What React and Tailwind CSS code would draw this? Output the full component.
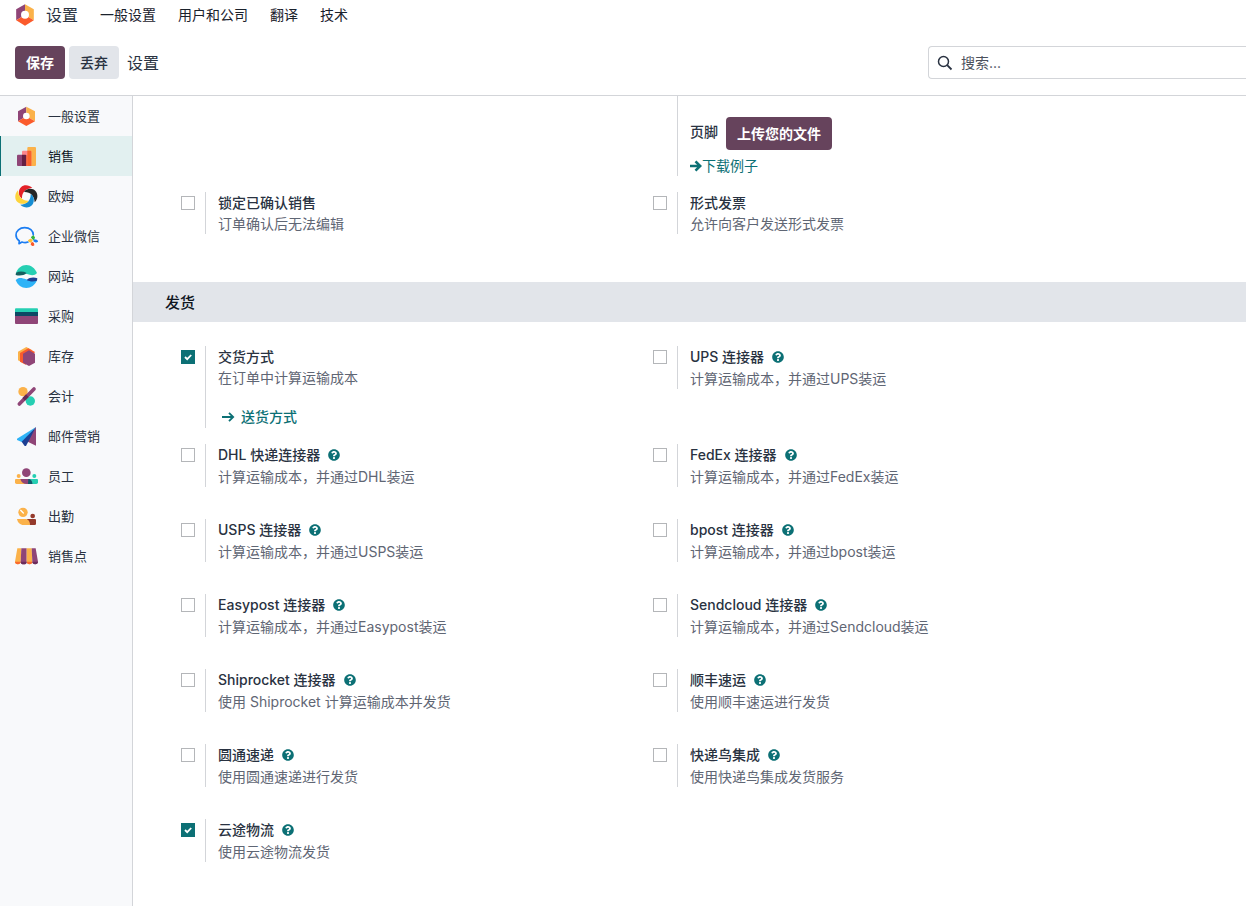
import React, { useState } from "react";
import { FaQuestionCircle } from "react-icons/fa";

const menuItems = ["一般设置", "用户和公司", "翻译", "技术"];

const HexLogo = ({ className }) => (
  <svg viewBox="6 4 57 66" className={className} aria-hidden="true">
    <path d="M34.5 5 8 20v33l26.500-16z" fill="#8f4577" />
    <path d="M34.500 5 61 20v33L34.500 37z" fill="#fbb24a" />
    <path d="M8 53l26.500-16L61 53 34.500 69z" fill="#fb5b2c" />
    <circle cx="34.500" cy="36" r="12" fill="#fff" />
  </svg>
);

const swirl = "M52 12C36-4 8 4 12 31c1 6 5 10 9 13C20 26 31 13 52 12z";

const icons = {
  general: (
    <>
      <path d="M34 8 9 22v30l25-15z" fill="#8f4577" />
      <path d="M34 8 60 22v30L34 37z" fill="#fbb24a" />
      <path d="M9 52l25-15 26 15-26 14z" fill="#fb5b2c" />
      <circle cx="34" cy="36" r="10" fill="#fff" />
    </>
  ),
  sales: (
    <>
      <rect x="6" y="32" width="28" height="34" rx="3" fill="#8f4577" />
      <rect x="37" y="9" width="26" height="57" rx="3" fill="#fbb24a" />
      <path d="M24 20h22a3 3 0 0 1 3 3v40a3 3 0 0 1-3 3H24a3 3 0 0 1-3-3V23a3 3 0 0 1 3-3z" fill="#fc868b" />
      <path d="M37 20h9a3 3 0 0 1 3 3v43H37z" fill="#f9622a" />
      <path d="M21 32h10a3 3 0 0 1 3 3v31H21z" fill="#641f42" />
      <path d="M34 34h3v32h-3z" fill="#f9622a" />
    </>
  ),
  ohm: (
    <>
      <path d={swirl} fill="#e32128" />
      <path d={swirl} fill="#262626" transform="rotate(90 34 37)" />
      <path d={swirl} fill="#168dd2" transform="rotate(180 34 37)" />
      <path d={swirl} fill="#fdd43c" transform="rotate(270 34 37)" />
    </>
  ),
  wecom: (
    <>
      <path
        d="M55 33C55 20 44 11 29 11 14 11 3 21 3 33c0 8 4 14 10 18l-1 8 9-5c6 2 13 2 18 0"
        fill="none"
        stroke="#1b7df2"
        strokeWidth="5"
        strokeLinecap="round"
        strokeLinejoin="round"
      />
      <path d="M50 40l5-4 3 5-3 5z" fill="#35b43f" stroke="#35b43f" strokeWidth="4" strokeLinejoin="round" />
      <path d="M41 50l6-4 4 4-5 4z" fill="#fdbf2e" stroke="#fdbf2e" strokeWidth="4" strokeLinejoin="round" />
      <path d="M51 56l4 2 1 5-4 1-3-3z" fill="#fb5a2a" stroke="#fb5a2a" strokeWidth="4" strokeLinejoin="round" />
      <path d="M58 48l7 1 2 3-4 2-6-3z" fill="#1b7df2" stroke="#1b7df2" strokeWidth="4" strokeLinejoin="round" />
    </>
  ),
  website: (
    <>
      <path d="M3 27C8 12 20 3 34 3c14 0 26 9 32 24-7 8-17 8-30 3C24 25 14 24 3 27z" fill="#26cfb3" />
      <path d="M3 26c11-5 22-4 32 1-9 8-21 9-33 6z" fill="#155f5f" />
      <path d="M66 49C60 64 48 72 34 72 20 72 8 64 2 48c8-9 19-7 31-2 12 5 22 6 33 3z" fill="#2eb3f7" />
      <path d="M66 50c-11 4-22 3-31-2 9-8 21-9 32-5z" fill="#1c3f93" />
    </>
  ),
  purchase: (
    <>
      <path d="M3 13h63a3 3 0 0 1 3 3v9H0v-9a3 3 0 0 1 3-3z" fill="#26cfb3" />
      <path d="M0 24h69v12H0z" fill="#0d4864" />
      <path d="M0 36h69v21a3 3 0 0 1-3 3H3a3 3 0 0 1-3-3z" fill="#8f4577" />
    </>
  ),
  inventory: (
    <>
      <path d="M9 23 34 9l18 10-28 38-15-8z" fill="#fbb24a" />
      <path d="M15 27 40 13l20 11-28 38-17-9z" fill="#fb5b2c" />
      <path d="M24 29 42 19l18 10v27L42 66 24 56z" fill="#8f4577" />
    </>
  ),
  accounting: (
    <>
      <circle cx="24" cy="23" r="14" fill="#fbb24a" />
      <circle cx="46" cy="51" r="14" fill="#26cfb3" />
      <path d="M13 60 57 15" stroke="#8f4577" strokeWidth="11" strokeLinecap="round" />
      <path d="M26 46l11-11" stroke="#642a55" strokeWidth="11" />
    </>
  ),
  email: (
    <>
      <path d="M63 9v56L35 52z" fill="#8f4577" />
      <path d="M63 9 6 44v4l16 7z" fill="#2eb3f7" />
      <path d="M63 9 20 53l9 13h4z" fill="#1c3f93" />
    </>
  ),
  employees: (
    <>
      <circle cx="34" cy="26" r="13" fill="#8f4577" />
      <circle cx="11" cy="36" r="6" fill="#fbb24a" />
      <circle cx="58" cy="36" r="6" fill="#26cfb3" />
      <path d="M3 45h26l8 15H5a5 5 0 0 1-5-5v-7a3 3 0 0 1 3-3z" fill="#fbb24a" />
      <path d="M38 45h28a3 3 0 0 1 3 3v7a5 5 0 0 1-5 5H36z" fill="#26cfb3" />
      <path d="M16 45h24c7 0 12 6 12 15H36c-11 0-17-5-20-15z" fill="#8f4577" />
      <path d="M40 45c7 0 12 6 12 15H39z" fill="#0d5c6c" />
    </>
  ),
  attendance: (
    <>
      <circle cx="24" cy="25" r="14" fill="#fbb24a" />
      <path d="M17 19l8 8" stroke="#fff" strokeWidth="4" strokeLinecap="round" />
      <circle cx="53" cy="36" r="7" fill="#953a2c" />
      <path d="M36 45h24a3 3 0 0 1 3 3v11a4 4 0 0 1-4 4H40z" fill="#953a2c" />
      <path d="M6 45h25c8 0 14 7 14 18H26C15 63 8 56 6 45z" fill="#fbb24a" />
    </>
  ),
  pos: (
    <>
      <path d="M7 13h12l-2 40a8 7 0 0 1-17 0z" fill="#fbb24a" />
      <path d="M19 13h16v40a8 7 0 0 1-18 0z" fill="#8f4577" />
      <path d="M35 13h15l2 40a8 7 0 0 1-17 0z" fill="#fbb24a" />
      <path d="M50 13h12l7 40a8 7 0 0 1-17 0z" fill="#8f4577" />
      <path d="M0 53h17a8 7 0 0 1-17 0zM35 53h17a8 7 0 0 1-17 0z" fill="#fb6a2c" />
      <path d="M17 53h18a8 7 0 0 1-18 0zM52 53h17a8 7 0 0 1-17 0z" fill="#6b2d5b" />
    </>
  ),
};

const apps = [
  { name: "一般设置", icon: "general" },
  { name: "销售", icon: "sales" },
  { name: "欧姆", icon: "ohm" },
  { name: "企业微信", icon: "wecom" },
  { name: "网站", icon: "website" },
  { name: "采购", icon: "purchase" },
  { name: "库存", icon: "inventory" },
  { name: "会计", icon: "accounting" },
  { name: "邮件营销", icon: "email" },
  { name: "员工", icon: "employees" },
  { name: "出勤", icon: "attendance" },
  { name: "销售点", icon: "pos" },
];

const orderSettings = [
  { id: "lock", title: "锁定已确认销售", text: "订单确认后无法编辑" },
  { id: "proforma", title: "形式发票", text: "允许向客户发送形式发票" },
];

const deliverySettings = [
  { id: "delivery", title: "交货方式", text: "在订单中计算运输成本", link: "送货方式" },
  { id: "ups", title: "UPS 连接器", text: "计算运输成本，并通过UPS装运", help: true },
];

const connectorSettings = [
  { id: "dhl", title: "DHL 快递连接器", text: "计算运输成本，并通过DHL装运", help: true },
  { id: "fedex", title: "FedEx 连接器", text: "计算运输成本，并通过FedEx装运", help: true },
  { id: "usps", title: "USPS 连接器", text: "计算运输成本，并通过USPS装运", help: true },
  { id: "bpost", title: "bpost 连接器", text: "计算运输成本，并通过bpost装运", help: true },
  { id: "easypost", title: "Easypost 连接器", text: "计算运输成本，并通过Easypost装运", help: true },
  { id: "sendcloud", title: "Sendcloud 连接器", text: "计算运输成本，并通过Sendcloud装运", help: true },
  { id: "shiprocket", title: "Shiprocket 连接器", text: "使用 Shiprocket 计算运输成本并发货", help: true },
  { id: "sf", title: "顺丰速运", text: "使用顺丰速运进行发货", help: true },
  { id: "yto", title: "圆通速递", text: "使用圆通速递进行发货", help: true },
  { id: "kdn", title: "快递鸟集成", text: "使用快递鸟集成发货服务", help: true },
  { id: "yunexpress", title: "云途物流", text: "使用云途物流发货", help: true },
];

function Setting({ item, checked, onToggle }) {
  return (
    <div className="flex items-start">
      <div className="relative mt-1 mr-2.5 size-3.5 shrink-0">
        <input
          type="checkbox"
          id={item.id}
          checked={checked}
          onChange={() => onToggle(item.id)}
          className="block size-3.5 appearance-none border border-[#b4b6b9] bg-white checked:border-[#0c7075] checked:bg-[#0c7075]"
        />
        {checked && (
          <svg viewBox="0 0 14 14" className="pointer-events-none absolute inset-0 size-3.5" aria-hidden="true">
            <path d="M4 7l2.200 2.200L10.200 5" fill="none" stroke="#fff" strokeWidth="1.800" />
          </svg>
        )}
      </div>
      <div className="border-l border-[#d3d5d9] pl-3">
        <div className="flex items-center gap-2">
          <label htmlFor={item.id} className={`font-medium text-[#293241] ${item.help ? "leading-[22px]" : "leading-[21px]"}`}>
            {item.title}
          </label>
          {item.help && <FaQuestionCircle className="size-3 text-[#0c7075]" />}
        </div>
        <p className="leading-[21px] text-[#5f6674]">{item.text}</p>
        {item.link && (
          <a href="#" className="mt-[18px] flex items-center gap-1.5 pl-[3px] leading-[22px] font-medium text-[#0c7075]">
            <svg viewBox="0 0 14 14" className="size-3.5" aria-hidden="true">
              <path d="M1 7h11M8 2.800 12.200 7 8 11.200" fill="none" stroke="currentColor" strokeWidth="1.800" />
            </svg>
            {item.link}
          </a>
        )}
      </div>
    </div>
  );
}

function App() {
  const [activeApp, setActiveApp] = useState("sales");
  const [enabled, setEnabled] = useState(["delivery", "yunexpress"]);

  const handleToggle = (id) => {
    setEnabled(enabled.includes(id) ? enabled.filter((e) => e !== id) : [...enabled, id]);
  };

  const renderSettings = (items) =>
    items.map((item) => (
      <Setting key={item.id} item={item} checked={enabled.includes(item.id)} onToggle={handleToggle} />
    ));

  return (
    <div className="flex min-h-screen flex-col overflow-x-hidden bg-white font-[Inter,'Noto_Sans_CJK_SC',sans-serif] text-sm text-[#293241]">
      <header className="border-b border-[#d3d5d9]">
        <nav className="flex h-[30px] items-center gap-[22px] pl-[15px]">
          <a href="#" className="flex items-center gap-[11px] text-base">
            <HexLogo className="h-[22px] w-5" />
            设置
          </a>
          {menuItems.map((name) => (
            <a key={name} href="#" className="text-[#1a212c]">
              {name}
            </a>
          ))}
        </nav>

        <div className="flex items-center justify-between py-4 pl-[15px]">
          <div className="flex items-center gap-1">
            <button type="button" className="h-[33px] rounded bg-[#66435c] px-[11px] font-bold text-white">
              保存
            </button>
            <button type="button" className="h-[33px] rounded bg-[#e2e5ea] px-[11px] font-medium">
              丢弃
            </button>
            <h1 className="pl-1 text-base">设置</h1>
          </div>
          <div className="flex h-[33px] w-[318px] items-center gap-2 rounded-l border border-r-0 border-[#d3d5d9] pl-2">
            <svg viewBox="0 0 16 16" className="size-4" aria-hidden="true">
              <circle cx="6.500" cy="6.500" r="5" fill="none" stroke="#293241" strokeWidth="1.500" />
              <path d="M10.200 10.200 14.500 14.500" stroke="#293241" strokeWidth="1.800" />
            </svg>
            <input
              type="text"
              aria-label="搜索"
              placeholder="搜索..."
              className="min-w-0 flex-1 outline-none placeholder:text-[#4b515c]"
            />
          </div>
        </div>
      </header>

      <div className="flex flex-1">
        <aside className="w-[133px] shrink-0 border-r border-[#d3d5d9] bg-[#f8f9fb] text-[13px]">
          {apps.map((app) => (
            <button
              key={app.name}
              type="button"
              onClick={() => setActiveApp(app.icon)}
              className={`flex h-10 w-full items-center gap-[9px] border-l pl-3.5 ${
                activeApp === app.icon ? "border-[#0c7075] bg-[#e2f0f0] text-[#10161f]" : "border-transparent"
              }`}
            >
              <svg viewBox="0 0 72 72" className="size-6" aria-hidden="true">
                {icons[app.icon]}
              </svg>
              {app.name}
            </button>
          ))}
        </aside>

        <main className="min-w-0 flex-1">
          <section className="grid max-w-[992px] grid-cols-2 gap-y-4 pb-12 pl-12">
            <div className="col-start-2 ml-6 border-l border-[#d3d5d9] pt-[21px] pl-3">
              <div className="flex items-start gap-2">
                <label htmlFor="footer" className="leading-[30px] font-medium">
                  页脚
                </label>
                <button id="footer" type="button" className="h-[33px] rounded bg-[#66435c] px-[11px] font-bold text-white">
                  上传您的文件
                </button>
              </div>
              <a href="#" className="mt-[5px] flex items-center leading-[21px] text-[#0c7075]">
                <svg viewBox="0 0 12 12" className="size-3" aria-hidden="true">
                  <path d="M0 6h9.500M5.500 1.300 10.200 6l-4.700 4.700" fill="none" stroke="currentColor" strokeWidth="2.600" />
                </svg>
                下载例子
              </a>
            </div>
            {renderSettings(orderSettings)}
          </section>

          <h2 className="bg-[#e2e5ea] pt-0.5 pl-8 text-[15px] leading-[38px] font-medium text-[#10161f]">发货</h2>

          <section className="max-w-[992px] pt-6 pb-8 pl-12">
            <div className="grid grid-cols-2">{renderSettings(deliverySettings)}</div>
            <div className="mt-4 grid grid-cols-2 gap-y-8">{renderSettings(connectorSettings)}</div>
          </section>
        </main>
      </div>
    </div>
  );
}

export default App;
